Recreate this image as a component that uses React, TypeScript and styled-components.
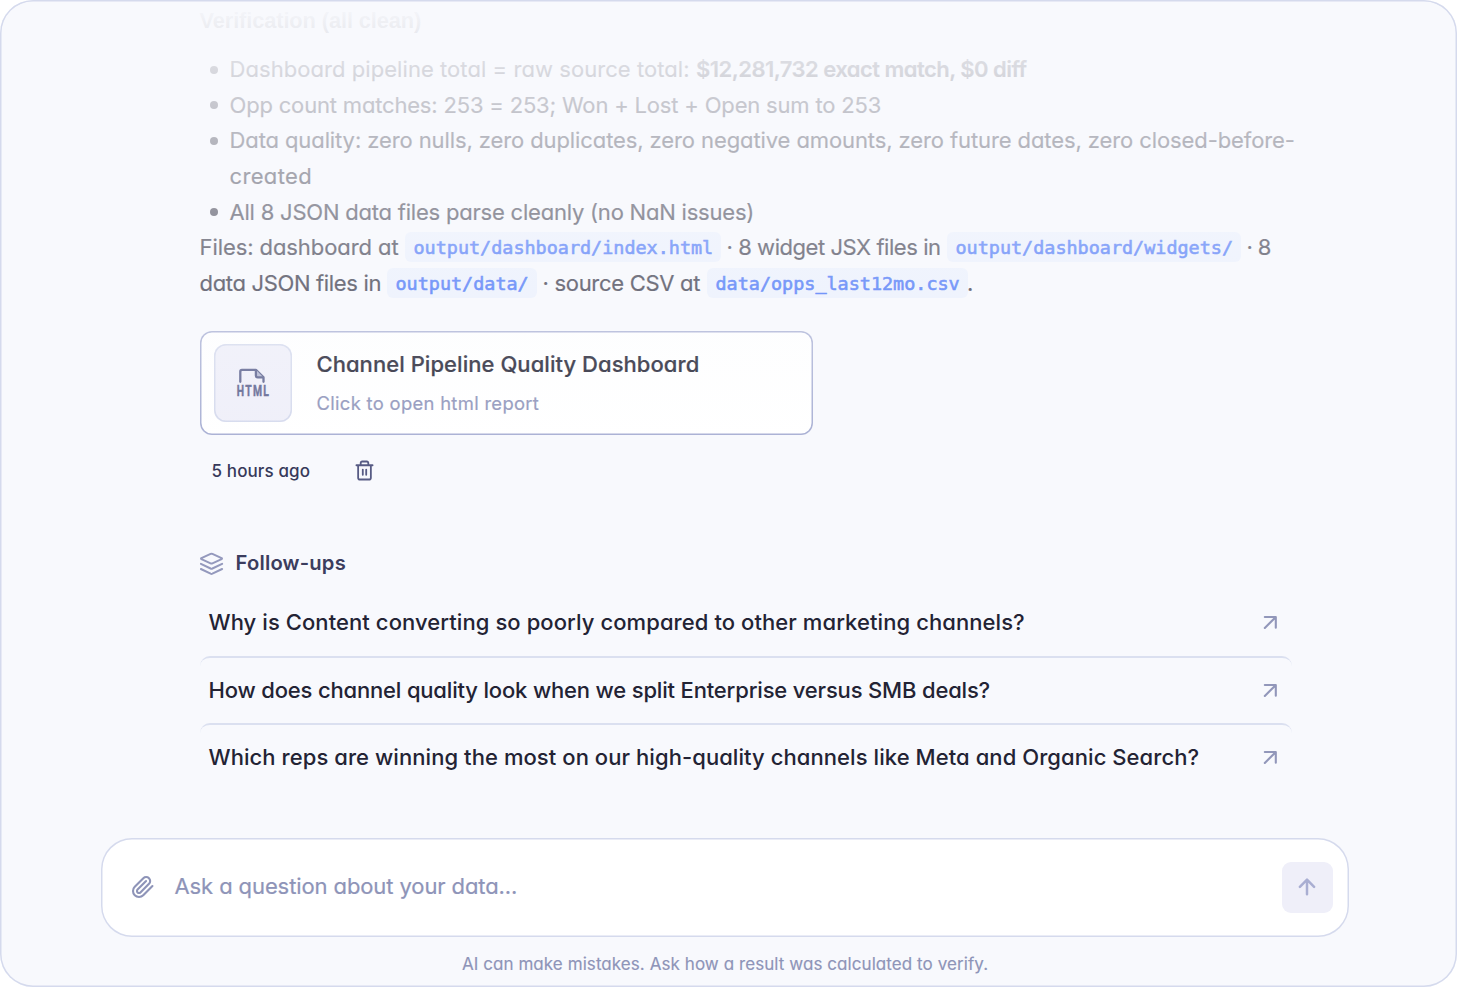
import React from "react";
import styled, { createGlobalStyle } from "styled-components";

const Global = createGlobalStyle`
  * { box-sizing: border-box; }
  body {
    margin: 0;
    background: #fff;
    font-family: Inter, "Open Sans", sans-serif;
    font-feature-settings: "cv11" 1, "calt" 0;
  }
`;

const Frame = styled.main`
  position: relative;
  display: flex;
  flex-direction: column;
  width: 1457px;
  height: 986.5px;
  border-radius: 33px;
  background: #f8f9fd;
  box-shadow: inset 0 0 0 1.5px #d5daed;
  overflow: hidden;
`;

const Fade = styled.div`
  position: absolute;
  inset: 2px 2px auto 2px;
  height: 446px;
  border-radius: 31px 31px 0 0;
  background: linear-gradient(to bottom, #f8f9fd, rgba(248, 249, 253, 0));
  pointer-events: none;
`;

const Column = styled.section`
  display: flex;
  flex-direction: column;
  width: 1092px;
  margin-left: 199.5px;
`;

const Heading = styled.h2`
  margin: 7px 0 0;
  height: 44px;
  font: bold 21.8px/27px "Liberation Sans", sans-serif;
  letter-spacing: -0.1px;
  color: #232334;
`;

const Line = styled.div`
  display: flex;
  align-items: center;
  height: 35.7px;
  white-space: pre;
  font-size: 22px;
  color: #232334;
`;

const List = styled.ul`
  margin: 0;
  padding: 0 0 0 10px;
  list-style: none;
`;

const Item = styled.li`
  display: flex;
  gap: 12px;
`;

const Bullet = styled.i`
  flex: none;
  width: 8px;
  height: 8px;
  margin-top: 14.5px;
  border-radius: 50%;
  background: #232334;
`;

const Run = styled.span<{ $track?: number; $bold?: boolean; $width?: number }>`
  flex: none;
  width: ${(p) => (p.$width ? `${p.$width}px` : "auto")};
  letter-spacing: ${(p) => p.$track ?? 0}px;
  font-weight: ${(p) => (p.$bold ? 600 : 400)};
  -webkit-text-stroke: 0.2px currentColor;
`;

const Code = styled.code<{ $width: number; $after?: number }>`
  flex: none;
  width: ${(p) => p.$width}px;
  height: 30px;
  margin-right: ${(p) => p.$after ?? 5.5}px;
  padding-left: 8.5px;
  border-radius: 6px;
  background: #eaf0fd;
  color: #2d61f6;
  font: 18.45px/32px "DejaVu Sans Mono", "Liberation Mono", monospace;
  -webkit-text-stroke: 0.6px #2d61f6;
`;

const Card = styled.article`
  display: flex;
  align-items: center;
  width: 613.5px;
  height: 104px;
  margin: 30.6px 0 0 0;
  padding-left: 14.5px;
  border-radius: 12px;
  background: #fff;
  box-shadow: inset 0 0 0 1.5px #a9b0d4;
`;

const Chip = styled.div`
  display: flex;
  align-items: center;
  justify-content: center;
  width: 78px;
  height: 78px;
  margin-right: 24.5px;
  border-radius: 12px;
  background: #efeff9;
  box-shadow: inset 0 0 0 1.5px #d5daed;
`;

const CardText = styled.div`
  display: flex;
  flex-direction: column;
  gap: 9px;
  margin-top: -1px;
`;

const CardTitle = styled.h3`
  margin: 0;
  font-size: 22px;
  font-weight: 500;
  line-height: 32px;
  letter-spacing: 0.05px;
  color: #232334;
  white-space: nowrap;
  -webkit-text-stroke: 0.2px currentColor;
`;

const CardHint = styled.p`
  margin: 0;
  font-size: 18.4px;
  line-height: 28px;
  letter-spacing: 0.32px;
  color: #9096bb;
  -webkit-text-stroke: 0.2px currentColor;
`;

const Meta = styled.div`
  display: flex;
  align-items: center;
  height: 30px;
  margin-top: 20.5px;
  padding-left: 12px;
  font-size: 17px;
  font-weight: 500;
  letter-spacing: 0.12px;
  color: #37395a;
`;

const Trash = styled.svg`
  margin-left: 44.5px;
`;

const FollowHeader = styled.header`
  display: flex;
  align-items: center;
  gap: 12px;
  height: 30px;
  margin-top: 62px;
  font-size: 20.2px;
  font-weight: 600;
  letter-spacing: 0.2px;
  color: #3b3d5e;
`;

const Questions = styled.div`
  display: flex;
  flex-direction: column;
  margin-top: 11px;
`;

const Question = styled.button<{ $track: number }>`
  display: flex;
  align-items: center;
  justify-content: space-between;
  height: 67px;
  padding: 0 14px 0 9px;
  border: 0 solid #dbe0f0;
  border-radius: 10px;
  background: none;
  color: #232334;
  font: 500 22px Inter, sans-serif;
  font-feature-settings: inherit;
  letter-spacing: ${(p) => p.$track}px;
  white-space: nowrap;
  & + & {
    border-top-width: 2px;
  }
`;

const Composer = styled.form`
  display: flex;
  align-items: center;
  width: 1248px;
  height: 99px;
  margin: 48px 0 0 101px;
  padding: 0 16px 0 30px;
  border-radius: 31px;
  background: #fff;
  box-shadow: inset 0 0 0 1.5px #d5daed;
`;

const Placeholder = styled.span`
  flex: 1;
  margin: -2px 0 0 19.5px;
  font-size: 22px;
  letter-spacing: -0.1px;
  color: #8e94b8;
  -webkit-text-stroke: 0.2px currentColor;
`;

const Send = styled.button`
  display: flex;
  align-items: center;
  justify-content: center;
  width: 51px;
  height: 51px;
  padding: 0;
  border: 0;
  border-radius: 9px;
  background: #efeff9;
`;

const Note = styled.p`
  margin: 14px 0 0;
  padding-right: 7px;
  text-align: center;
  font-size: 17px;
  line-height: 27px;
  letter-spacing: 0.07px;
  color: #8e94b8;
  -webkit-text-stroke: 0.15px currentColor;
`;

const stroke = { fill: "none", strokeLinecap: "round", strokeLinejoin: "round" } as const;

const HtmlIcon = () => (
  <svg width="38" height="40" viewBox="-1 -4 38 40">
    <path {...stroke} stroke="#5f6590" strokeWidth="2.3" d="M5.3 14.800V4.400a1.600 1.600 0 0 1 1.600-1.600h14l7.600 7.600v4.400" />
    <path d="M20.900 2.800v5.800q0 1.800 1.800 1.800h5.800" fill="#b5b9d3" stroke="#5f6590" strokeWidth="2.3" strokeLinejoin="round" />
    <text transform="translate(1.8 29) scale(0.74 1)" letterSpacing="1.700" fontFamily="Roboto, sans-serif" fontWeight="700" fontSize="14" fill="#5f6590" stroke="#5f6590" strokeWidth="0.400">HTML</text>
  </svg>
);

const TrashIcon = () => (
  <Trash width="19" height="21" viewBox="0 0 20 22" {...stroke} stroke="#575b84" strokeWidth="1.900">
    <path d="M1.500 5.500h17M3.300 5.500v13a2 2 0 0 0 2 2h9.400a2 2 0 0 0 2-2v-13M6 5.300V3a1.500 1.500 0 0 1 1.500-1.500h5A1.500 1.500 0 0 1 14 3v2.300M8.200 10v5.500M11.800 10v5.500" />
  </Trash>
);

const LayersIcon = () => (
  <svg width="24" height="24" viewBox="0.5 -0.5 24 24" {...stroke} stroke="#9499bd" strokeWidth="2">
    <path d="M11.100 2.400 1.900 6.600q-.8.500 0 1l9.200 4.300q.9.400 1.800 0l9.200-4.300q.8-.5 0-1l-9.200-4.200q-.9-.4-1.800 0Z" />
    <path d="m1.400 12.300 9.700 4.700q.9.400 1.800 0l9.700-4.700M1.400 17.500l9.700 4.700q.9.400 1.800 0l9.700-4.700" />
  </svg>
);

const OpenIcon = () => (
  <svg width="16" height="16" viewBox="0 0 16 16" {...stroke} stroke="#9297ba" strokeWidth="2.100">
    <path d="M2.800 3h11v10.700M13.600 3.200 2.800 14" />
  </svg>
);

const ClipIcon = () => (
  <svg width="24" height="24" viewBox="0 0 24 24" {...stroke} stroke="#8e94b8" strokeWidth="2.100">
    <path d="m21.440 11.050-9.190 9.190a6 6 0 0 1-8.490-8.490l8.570-8.570A4 4 0 1 1 18 8.840l-8.590 8.570a2 2 0 0 1-2.830-2.830l8.490-8.480" />
  </svg>
);

const UpIcon = () => (
  <svg width="19" height="18" viewBox="0 0 19 18" {...stroke} stroke="#a9aed2" strokeWidth="2.500">
    <path d="M9 16.300V1.900M1.900 8.800 9 1.700l7.100 7.100" />
  </svg>
);

const questions = [
  { text: "Why is Content converting so poorly compared to other marketing channels?", track: 0.08 },
  { text: "How does channel quality look when we split Enterprise versus SMB deals?", track: -0.17 },
  { text: "Which reps are winning the most on our high-quality channels like Meta and Organic Search?", track: 0.07 },
];

export default function App() {
  return (
    <>
      <Global />
      <Frame>
        <Column>
          <Heading>Verification (all clean)</Heading>
          <List>
            <Item>
              <Bullet />
              <Line>
                <Run $track={0.06} $width={466.5}>Dashboard pipeline total = raw source total: </Run>
                <Run $bold $track={-0.53}>$12,281,732 exact match, $0 diff</Run>
              </Line>
            </Item>
            <Item>
              <Bullet />
              <Line><Run $track={-0.18}>Opp count matches: 253 = 253; Won + Lost + Open sum to 253</Run></Line>
            </Item>
            <Item>
              <Bullet />
              <div>
                <Line><Run $track={-0.1}>Data quality: zero nulls, zero duplicates, zero negative amounts, zero future dates, zero closed-before-</Run></Line>
                <Line><Run $track={0.35}>created</Run></Line>
              </div>
            </Item>
            <Item>
              <Bullet />
              <Line><Run $track={-0.21}>All 8 JSON data files parse cleanly (no NaN issues)</Run></Line>
            </Item>
          </List>
          <Line>
            <Run $track={-0.08} $width={205.5}>Files: dashboard at </Run>
            <Code $width={316}>output/dashboard/index.html</Code>
            <Run $track={-0.44} $width={220.5}>· 8 widget JSX files in </Run>
            <Code $width={294}>output/dashboard/widgets/</Code>
            <Run $track={-0.7}>· 8</Run>
          </Line>
          <Line>
            <Run $track={-0.33} $width={187.5}>data JSON files in </Run>
            <Code $width={150}>output/data/</Code>
            <Run $track={-0.3} $width={164.5}>· source CSV at </Run>
            <Code $width={261} $after={-1}>data/opps_last12mo.csv</Code>
            <Run>.</Run>
          </Line>
          <Card>
            <Chip><HtmlIcon /></Chip>
            <CardText>
              <CardTitle>Channel Pipeline Quality Dashboard</CardTitle>
              <CardHint>Click to open html report</CardHint>
            </CardText>
          </Card>
          <Meta>5 hours ago<TrashIcon /></Meta>
          <FollowHeader><LayersIcon />Follow-ups</FollowHeader>
          <Questions>
            {questions.map((q) => (
              <Question key={q.text} $track={q.track}>{q.text}<OpenIcon /></Question>
            ))}
          </Questions>
        </Column>
        <Composer>
          <ClipIcon />
          <Placeholder>Ask a question about your data...</Placeholder>
          <Send type="button" aria-label="Send"><UpIcon /></Send>
        </Composer>
        <Note>AI can make mistakes. Ask how a result was calculated to verify.</Note>
        <Fade />
      </Frame>
    </>
  );
}
